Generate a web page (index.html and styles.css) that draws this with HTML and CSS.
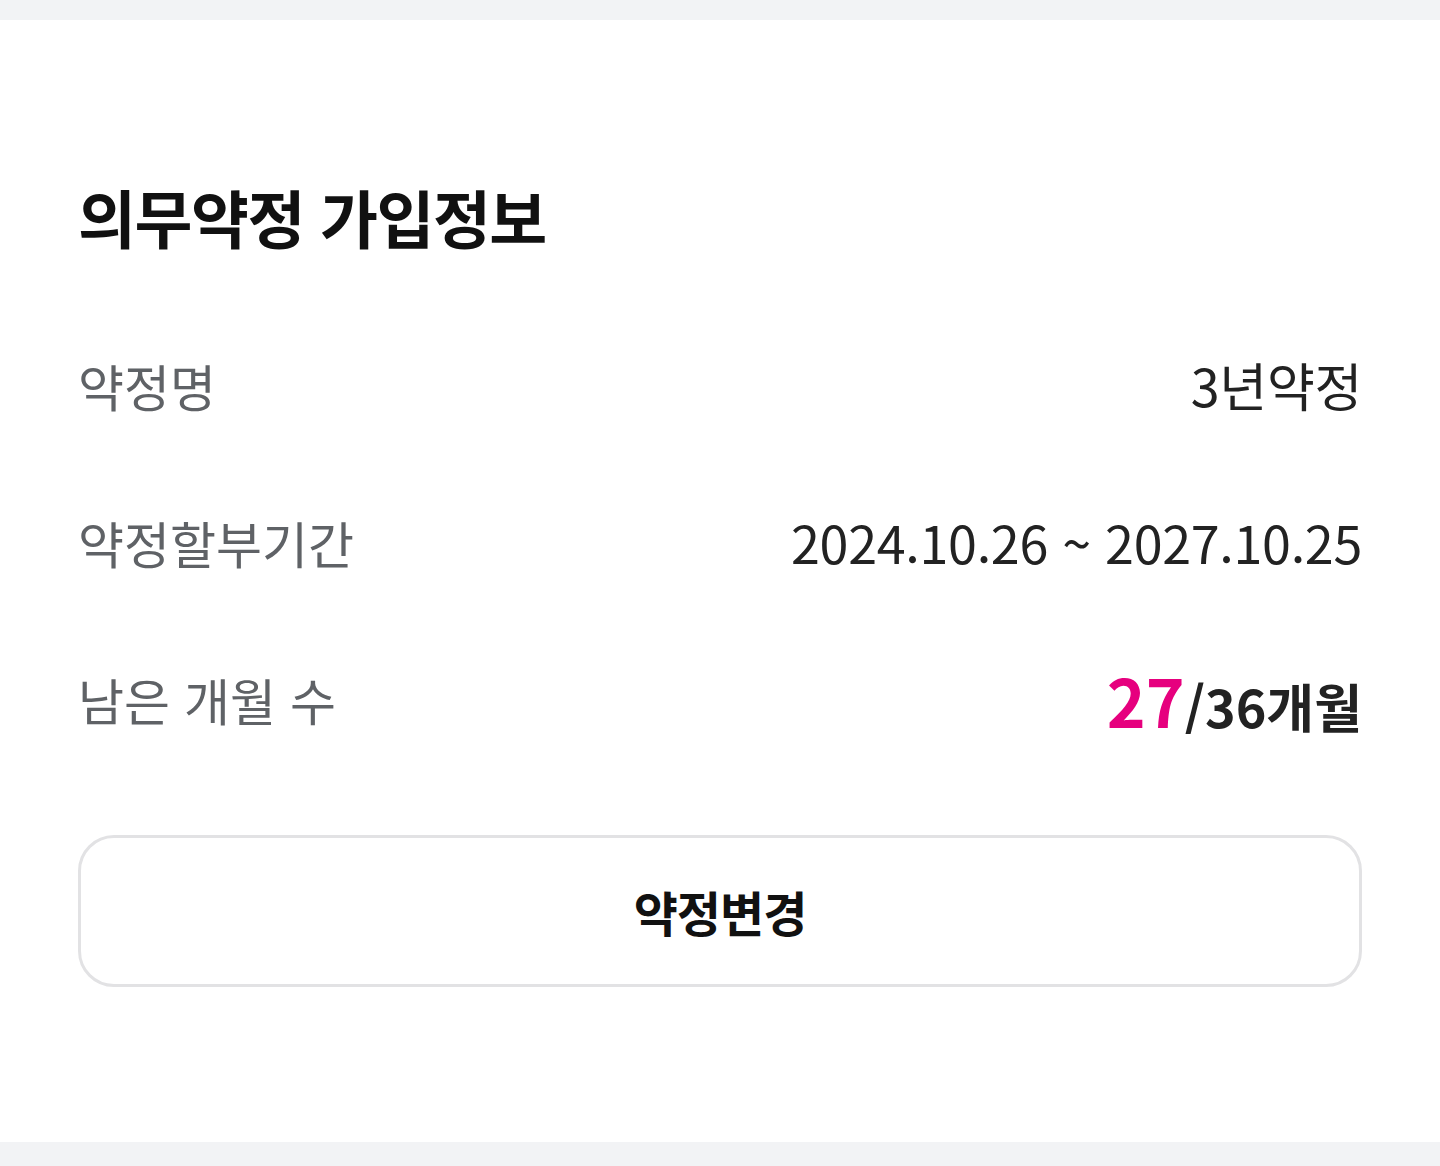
FILE: index.html
```html
<!DOCTYPE html>
<html lang="ko">
<head>
    <meta charset="UTF-8">
    <meta name="viewport" content="width=device-width, initial-scale=1.0">
    <title>의무약정 가입정보</title>
    <link rel="stylesheet" href="styles.css">
</head>
<body>
    <div class="page">
        <section class="card">
            <h2 class="card-title">의무약정 가입정보</h2>

            <ul class="info-list">
                <li class="info-row">
                    <span class="info-label">약정명</span>
                    <span class="info-value">3년약정</span>
                </li>
                <li class="info-row">
                    <span class="info-label">약정할부기간</span>
                    <span class="info-value">2024.10.26 ~ 2027.10.25</span>
                </li>
                <li class="info-row">
                    <span class="info-label">남은 개월 수</span>
                    <span class="info-value months"><em class="remain">27</em>/36개월</span>
                </li>
            </ul>

            <button class="btn-change" type="button">약정변경</button>
        </section>
    </div>
</body>
</html>
```

FILE: styles.css
```css
* {
    box-sizing: border-box;
}

body {
    margin: 0;
    padding: 0;
    background: #f2f3f5;
    font-family: "Noto Sans CJK KR", "Noto Sans", sans-serif;
    color: #111;
}

.page {
    padding: 20px 0 24px;
}

.card {
    background: #fff;
    padding: 156px 78px 155px;
}

.card-title {
    margin: 0;
    font-size: 63px;
    line-height: 80px;
    font-weight: 700;
    letter-spacing: -1.5px;
    color: #111;
}

.info-list {
    list-style: none;
    margin: 50px 0 0;
    padding: 0;
}

.info-row {
    display: flex;
    justify-content: space-between;
    align-items: center;
    height: 157px;
}

.info-label {
    font-size: 50px;
    color: #5f6266;
}

.info-value {
    font-size: 52px;
    color: #222;
    letter-spacing: -0.3px;
}

.months {
    font-weight: 700;
    letter-spacing: 0;
}

.remain {
    font-style: normal;
    font-size: 66px;
    color: #e6007e;
}

.btn-change {
    display: block;
    width: 100%;
    height: 152px;
    margin-top: 58px;
    background: #fff;
    border: 3px solid #e2e2e4;
    border-radius: 36px;
    font-family: inherit;
    font-size: 48px;
    font-weight: 700;
    color: #111;
    letter-spacing: -1px;
    cursor: pointer;
}
```
